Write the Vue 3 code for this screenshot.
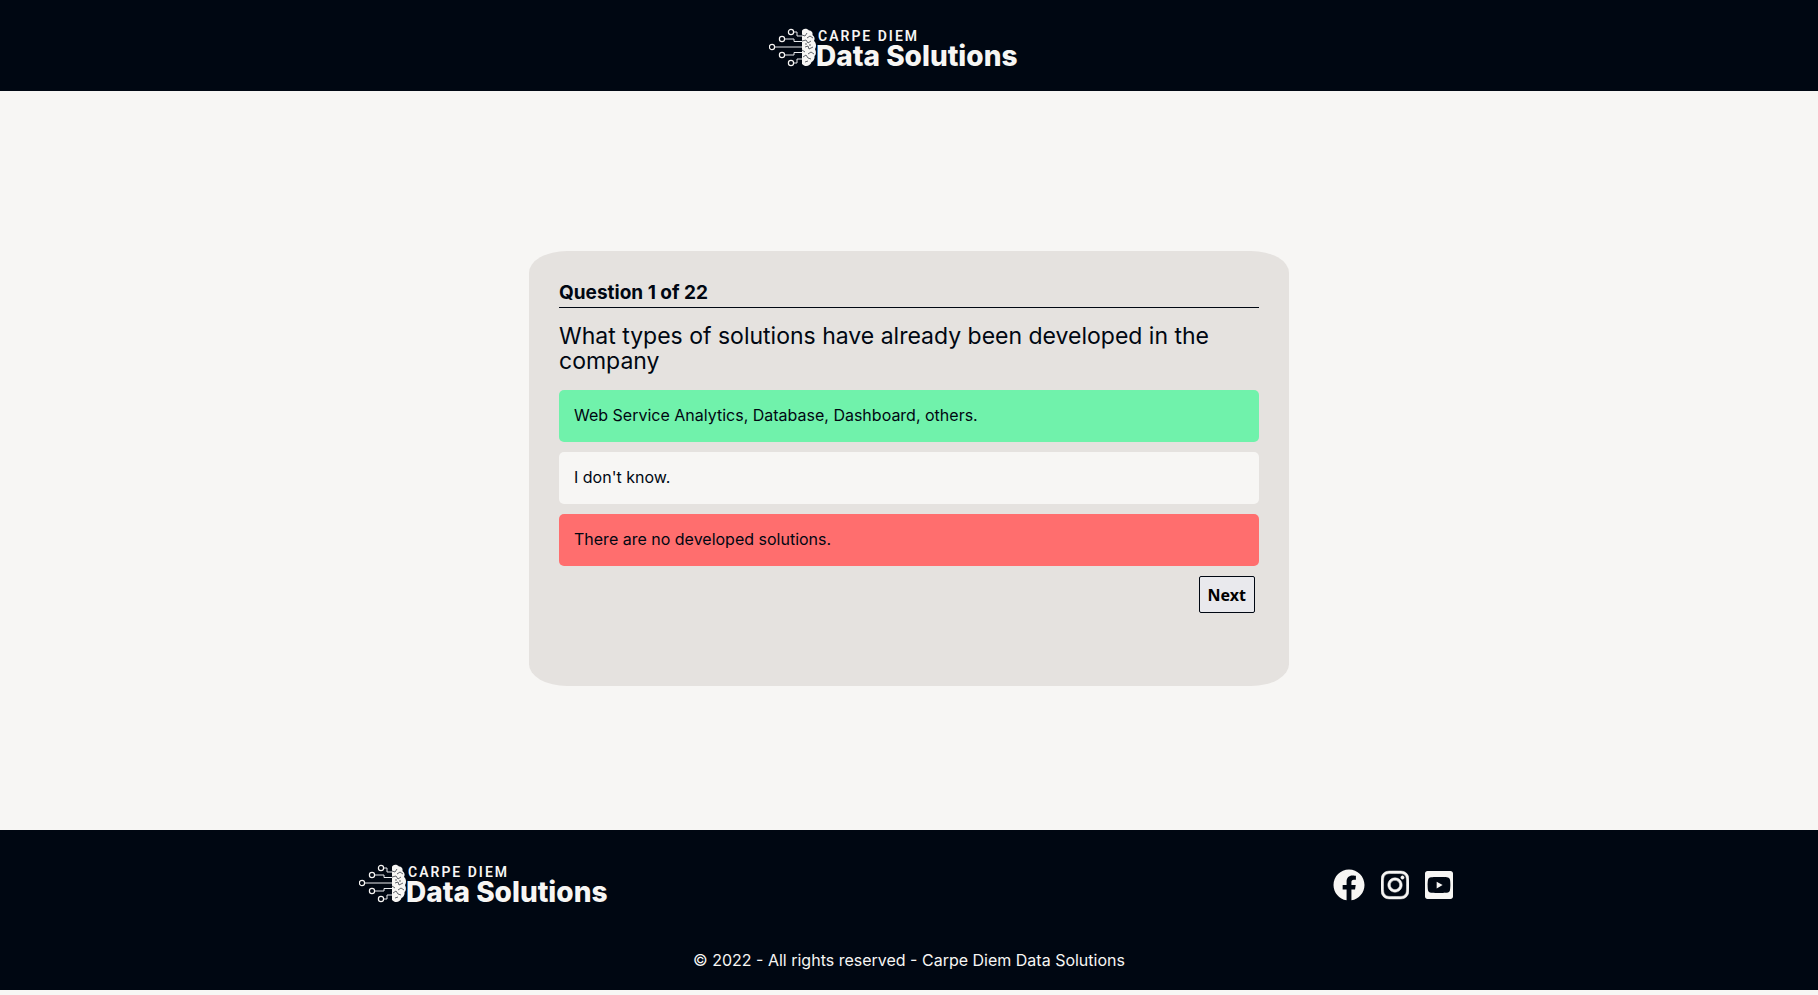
<script setup>
import { ref, h } from 'vue'

const options = [
  { text: 'Web Service Analytics, Database, Dashboard, others.', state: 'correct' },
  { text: "I don't know.", state: '' },
  { text: 'There are no developed solutions.', state: 'wrong' },
]
const current = ref(1)
const total = 22

const nodes = [[22, 6], [13, 13], [3, 21], [13, 29], [22, 37]]
const traces = 'M25 6H28V10H34M16 13H25V15.5H34M6 21H34M16 29H25V26.5H34M25 37H28V33H34'
const brain = 'M33 5C33 2.500 38 1.500 40 4.500C43 4.500 44 7 43.500 9C46 11 46 13 45 15C47.500 17 47.500 21 46 23C47.500 26 47 29 45.500 30C46 33 44 35.500 42.500 36C42 39 38 41 35 39.500L33 38Z'
const folds = 'M33 9L36 10L38 7M38 12L41 10L44 12M33 15L37 14L39 17L42 15M36 21L39 20L40 23L44 21M33 24L36 26M39 28L42 26L45 28M34 31L37 29L39 32L42 33M36 36L39 35M41 18V20M37 17V19'

const BrandLogo = () =>
  h('svg', { width: 280, height: 46, viewBox: '0 0 280 46', role: 'img', 'aria-label': 'Carpe Diem Data Solutions' }, [
    h('path', { d: traces, fill: 'none', stroke: '#e9ebee', 'stroke-width': 1 }),
    ...nodes.map(([cx, cy]) => h('circle', { cx, cy, r: 2.6, fill: '#000712', stroke: '#f7f6f4', 'stroke-width': 1.2 })),
    h('path', { d: brain, fill: '#f7f6f4' }),
    h('path', { d: folds, fill: 'none', stroke: '#3a3f48', 'stroke-width': 0.8 }),
    h('text', { x: 49, y: 15, fill: '#f7f6f4', 'font-family': 'Roboto, sans-serif', 'font-size': 14, 'font-weight': 600, 'letter-spacing': 2 }, 'CARPE DIEM'),
    h('text', { x: 47, y: 40, fill: '#f7f6f4', 'font-family': 'Inter, sans-serif', 'font-size': 28, 'font-weight': 800 }, 'Data Solutions'),
  ])
</script>

<template>
  <div class="page">
    <header class="top">
      <BrandLogo />
    </header>

    <main class="content">
      <section class="card">
        <h1 class="count">Question {{ current }} of {{ total }}</h1>
        <p class="question">What types of solutions have already been developed in the company</p>
        <div class="options">
          <button v-for="o in options" :key="o.text" type="button" class="option" :class="o.state">{{ o.text }}</button>
        </div>
        <button type="button" class="next">Next</button>
      </section>
    </main>

    <footer class="bottom">
      <div class="bar">
        <BrandLogo />
        <nav class="social">
          <a href="#" aria-label="Facebook">
            <svg width="32" height="32" viewBox="0 0 512 512"><path fill="currentColor" d="M504 256C504 119 393 8 256 8S8 119 8 256c0 123.780 90.690 226.380 209.250 245V327.690h-63V256h63v-54.640c0-62.150 37-96.480 93.670-96.480 27.140 0 55.520 4.840 55.520 4.840v61h-31.280c-30.800 0-40.410 19.120-40.410 38.730V256h68.780l-11 71.690h-57.780V501C413.310 482.380 504 379.780 504 256z" /></svg>
          </a>
          <a href="#" aria-label="Instagram">
            <svg width="28" height="32" viewBox="0 0 448 512"><path fill="currentColor" stroke="currentColor" stroke-width="8" d="M224.100 141c-63.600 0-114.900 51.300-114.900 114.900s51.300 114.900 114.900 114.900S339 319.500 339 255.900 287.700 141 224.100 141zm0 189.600c-41.100 0-74.700-33.500-74.700-74.700s33.500-74.700 74.700-74.700 74.700 33.500 74.700 74.700-33.600 74.700-74.700 74.700zm146.400-194.300c0 14.900-12 26.800-26.800 26.800-14.900 0-26.800-12-26.800-26.800s12-26.800 26.800-26.800 26.800 12 26.800 26.800zm76.100 27.200c-1.700-35.900-9.900-67.700-36.200-93.900-26.200-26.200-58-34.400-93.900-36.200-37-2.100-147.900-2.100-184.900 0-35.800 1.700-67.600 9.900-93.900 36.100s-34.400 58-36.200 93.900c-2.100 37-2.100 147.900 0 184.900 1.700 35.900 9.900 67.700 36.200 93.900s58 34.400 93.900 36.200c37 2.100 147.900 2.100 184.900 0 35.900-1.700 67.700-9.900 93.900-36.200 26.200-26.200 34.400-58 36.200-93.900 2.100-37 2.100-147.800 0-184.800zM398.800 388c-7.800 19.600-22.900 34.700-42.600 42.600-29.500 11.700-99.500 9-132.100 9s-102.700 2.600-132.100-9c-19.600-7.800-34.700-22.900-42.600-42.600-11.700-29.500-9-99.500-9-132.100s-2.600-102.700 9-132.100c7.800-19.600 22.900-34.700 42.600-42.600 29.500-11.700 99.500-9 132.100-9s102.700-2.600 132.100 9c19.600 7.800 34.700 22.900 42.600 42.600 11.700 29.500 9 99.500 9 132.100s2.700 102.700-9 132.100z" /></svg>
          </a>
          <a href="#" aria-label="YouTube">
            <svg width="28" height="32" viewBox="0 0 448 512"><path fill="currentColor" d="M186.800 202.100l95.200 54.100-95.200 54.100V202.100zM448 72v368c0 22-18 40-40 40H40c-22 0-40-18-40-40V72c0-22 18-40 40-40h368c22 0 40 18 40 40zm-42 184.300s0-59.600-7.600-88.200c-4.200-15.800-16.500-28.200-32.200-32.400C337.900 128 224 128 224 128s-113.900 0-142.200 7.700c-15.700 4.200-28 16.600-32.200 32.400-7.600 28.500-7.600 88.200-7.600 88.200s0 59.600 7.600 88.200c4.200 15.800 16.500 27.700 32.200 31.900C110.100 384 224 384 224 384s113.900 0 142.200-7.700c15.700-4.200 28-16.100 32.200-31.900 7.600-28.500 7.600-88.100 7.600-88.100z" /></svg>
          </a>
        </nav>
      </div>
      <p class="copy">© 2022 - All rights reserved - Carpe Diem Data Solutions</p>
    </footer>
  </div>
</template>

<style>
body {
  margin: 0;
  background: #f7f6f4;
}
</style>

<style scoped>
.page {
  font-family: Inter, "Open Sans", sans-serif;
  color: #000712;
}
.top {
  display: flex;
  justify-content: center;
  padding: 26px 0 19px;
  background: #000712;
}
.content {
  display: flex;
  justify-content: center;
  padding: 160px 20px 144px;
}
.card {
  box-sizing: border-box;
  display: flex;
  flex-direction: column;
  width: 100%;
  max-width: 760px;
  min-height: 435px;
  padding: 30px;
  border-radius: 5%;
  background: #e5e2df;
}
.count {
  margin: 0 0 16px;
  padding-bottom: 2px;
  border-bottom: 1px solid #000712;
  font-size: 19px;
  line-height: 24px;
  font-weight: 700;
}
.question {
  margin: 0 0 16px;
  font-size: 23px;
  line-height: 25px;
  font-weight: 400;
}
.options {
  display: flex;
  flex-direction: column;
  gap: 10px;
}
.option {
  padding: 15px 15px 17px;
  border: 0;
  border-radius: 5px;
  background: #f7f6f4;
  color: inherit;
  font-family: inherit;
  font-size: 16px;
  line-height: 20px;
  text-align: left;
}
.option.correct {
  background: #70f2ab;
}
.option.wrong {
  background: #ff6e6e;
}
.next {
  align-self: flex-end;
  margin: 10px 4px 0 0;
  padding: 8px 8px 6px;
  border: 1px solid #000712;
  border-radius: 2px;
  background: #e9e9ed;
  color: #000;
  font-family: "Noto Sans", "Open Sans", sans-serif;
  font-size: 16px;
  line-height: 21px;
  font-weight: 700;
}
.bottom {
  padding: 32px 20px 20px;
  background: #000712;
  color: #f7f6f4;
}
.bar {
  display: flex;
  justify-content: space-between;
  align-items: center;
  max-width: 1100px;
  margin: 0 auto;
}
.social {
  display: flex;
  gap: 16px;
  padding-right: 6px;
}
.social a {
  display: flex;
  color: #f7f6f4;
}
.copy {
  margin: 42px 0 0;
  font-size: 16px;
  line-height: 20px;
  text-align: center;
}
</style>
